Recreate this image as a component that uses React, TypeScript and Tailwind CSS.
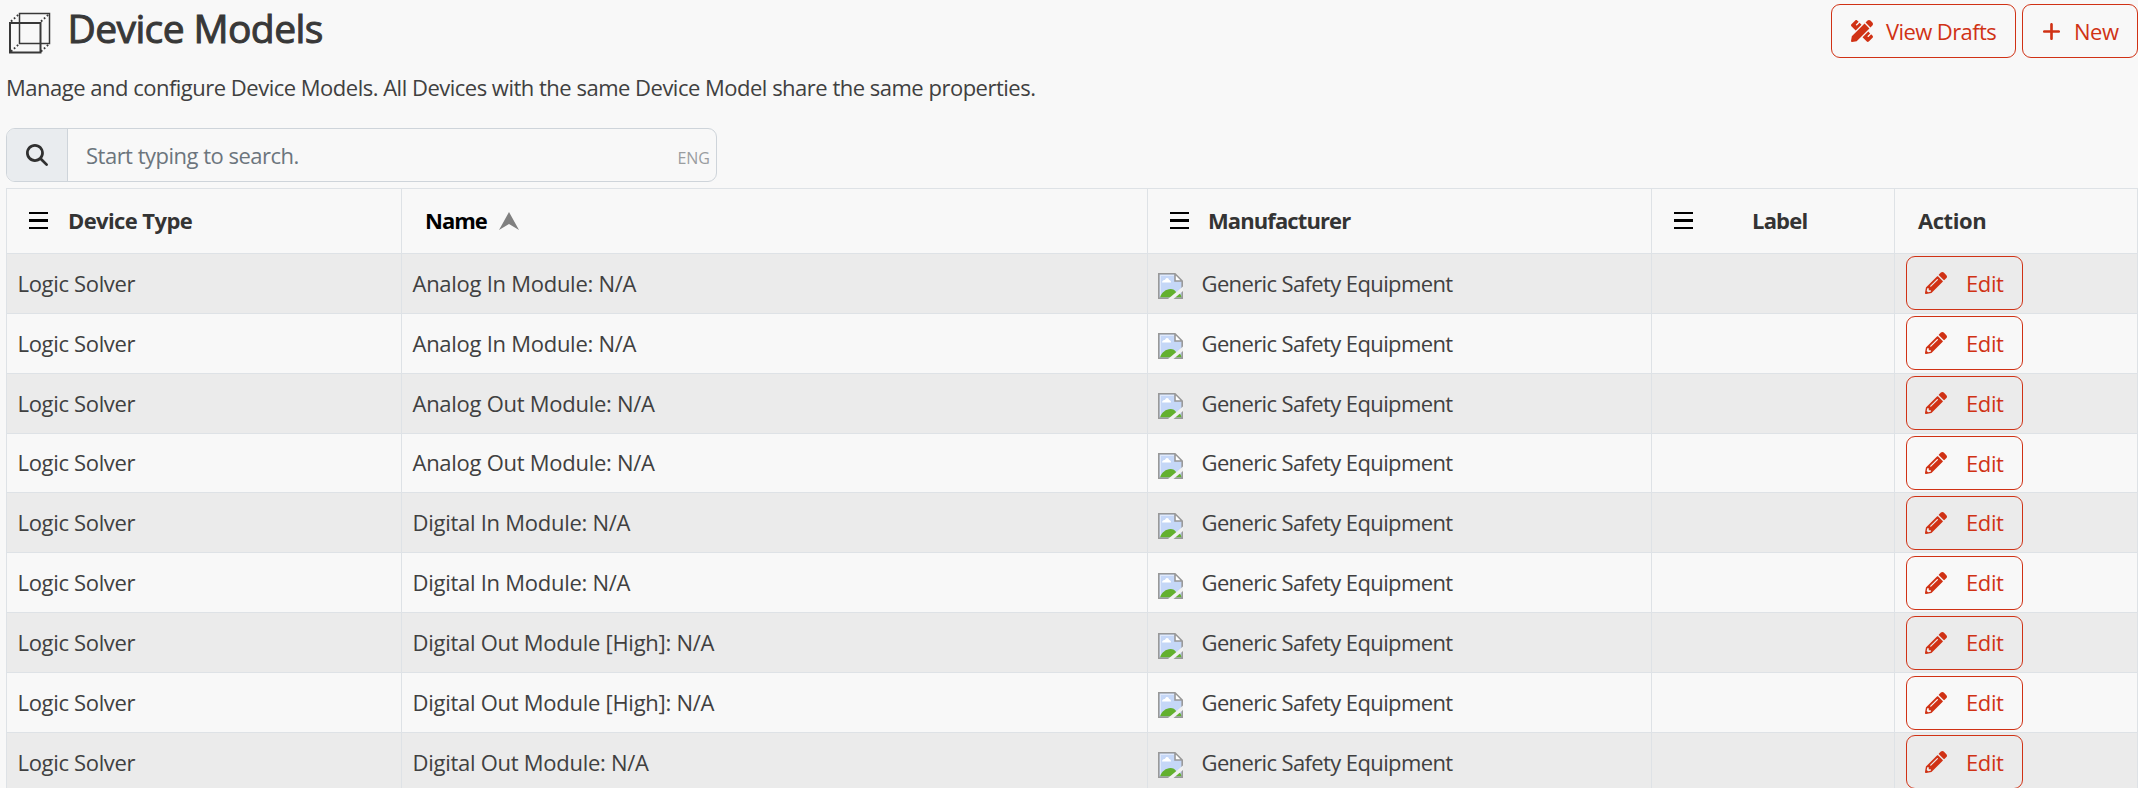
import { FaPencilAlt, FaPencilRuler } from "react-icons/fa";
import { FaMagnifyingGlass, FaPlus } from "react-icons/fa6";

const names = [
  "Analog In Module: N/A",
  "Analog In Module: N/A",
  "Analog Out Module: N/A",
  "Analog Out Module: N/A",
  "Digital In Module: N/A",
  "Digital In Module: N/A",
  "Digital Out Module [High]: N/A",
  "Digital Out Module [High]: N/A",
  "Digital Out Module: N/A",
];

function CubeIcon() {
  return (
    <svg width="42" height="42" viewBox="0 0 42 42" fill="none" stroke="#383838">
      <rect x="10.500" y="1.500" width="30" height="30" strokeWidth="1.5" />
      <rect x="1" y="11" width="30.500" height="29.500" strokeWidth="2" />
      <path
        d="M2 9.500 10 2M32 9.500 40 2M2 39.500 10 32M32 39.500 40 32"
        strokeWidth="1.8"
        strokeDasharray="1.8 2.2"
      />
    </svg>
  );
}

function MenuIcon() {
  return (
    <svg width="19" height="17" viewBox="0 0 19 17" shapeRendering="crispEdges">
      <path d="M0 0h19v2H0zM0 7h19v3H0zM0 15h19v2H0z" />
    </svg>
  );
}

function SortIcon() {
  return (
    <svg width="20" height="18" viewBox="0 0 20 18" fill="#808080">
      <path d="M10 0 20 18 10 12 0 18z" />
    </svg>
  );
}

function BrokenImage() {
  return (
    <svg width="25" height="26" viewBox="0 0 25 26">
      <path d="M1 1h16l7 7v17H1z" fill="#c5d7f7" />
      <path d="M2.300 24V2.300H16" fill="none" stroke="#e6eefc" strokeWidth="1" />
      <path d="M4 9.500c0-2 2-2.500 3-2.500 1-3 4-2 4 0 1.500 0 2 1 2 2.500z" fill="#fff" />
      <path d="M2 24.500c1.500-5 6-8.500 10.500-8.500 2.500 0 4.500 1 6 3.500l3.500 1 2 4z" fill="#62b02e" />
      <path d="M17 1v7h7z" fill="#fff" />
      <path
        d="M17 0.800V8h7.200M0.800 25.200V0.800H17l7.200 7.200v17.200z"
        fill="none"
        stroke="#999999"
        strokeWidth="1.600"
      />
      <path d="M25 13.500V18L15.500 26H10z" fill="#f0f0f0" />
    </svg>
  );
}

function EditButton() {
  return (
    <button className="flex h-[54px] w-[117px] items-center rounded-[9px] border border-[#d03215] pl-[18px] text-[#d03215]">
      <FaPencilAlt size={22} />
      <span className="ml-[19px] tracking-[-0.4px]">Edit</span>
    </button>
  );
}

const grid = "grid grid-cols-[395px_746px_504px_243px_243px]";
const cell = "flex items-center border-r border-[#dee2e6]";

export default function App() {
  return (
    <div className="h-[788px] overflow-hidden bg-[#f8f8f8] pl-1.5 font-['Open_Sans',sans-serif] text-[22px] text-[#404040]">
      <header className="flex h-[66px] items-start justify-between">
        <div className="flex items-start pt-[12px] pl-[3px]">
          <CubeIcon />
          <h1 className="mt-[-11px] ml-[16.5px] text-[39px] leading-[54px] tracking-[-0.6px] text-[#383838] [-webkit-text-stroke:1px_#383838]">
            Device Models
          </h1>
        </div>
        <div className="flex gap-1.5 pt-1 text-[#d03215]">
          <button className="flex h-[54px] w-[185px] items-center rounded-[9px] border border-[#d03215] pl-[19px]">
            <FaPencilRuler size={22} />
            <span className="ml-[13px] tracking-[-0.6px]">View Drafts</span>
          </button>
          <button className="flex h-[54px] w-[116px] items-center rounded-[9px] border border-[#d03215] pl-[18px]">
            <FaPlus size={21} />
            <span className="ml-[12px] tracking-[-0.5px]">New</span>
          </button>
        </div>
      </header>
      <p className="h-[62px] leading-[42px] tracking-[-0.5px]">
        Manage and configure Device Models. All Devices with the same Device Model share the same properties.
      </p>
      <div className="flex h-[54px] w-[711px] items-center overflow-hidden rounded-[9px] border border-[#ced4da]">
        <div className="flex h-full w-[61px] items-center border-r border-[#ced4da] bg-[#e9ecef] pl-[19px] text-[#303030]">
          <FaMagnifyingGlass size={22} />
        </div>
        <span className="ml-[18px] flex-1 tracking-[-0.5px] text-[#6c757d]">Start typing to search.</span>
        <span className="mt-1.5 mr-1.5 text-base text-[#9a9da0]">ENG</span>
      </div>
      <div className="mt-1.5 w-[2132px] border-t border-l border-[#dee2e6]">
        <div className={`${grid} h-[64.9px] border-b border-[#dee2e6] font-bold text-[#343434]`}>
          <div className={`${cell} pl-[22px]`}>
            <MenuIcon />
            <span className="ml-5 tracking-[-0.6px]">Device Type</span>
          </div>
          <div className={`${cell} pl-[23px] text-black`}>
            <span className="tracking-[-1px]">Name</span>
            <span className="ml-[12px]"><SortIcon /></span>
          </div>
          <div className={`${cell} pl-[22px]`}>
            <MenuIcon />
            <span className="ml-[19px] tracking-[-0.9px]">Manufacturer</span>
          </div>
          <div className={`${cell} pl-[22px]`}>
            <MenuIcon />
            <span className="ml-[59px] tracking-[-0.8px]">Label</span>
          </div>
          <div className={`${cell} pl-[23px]`}>
            <span className="tracking-[-0.45px]">Action</span>
          </div>
        </div>
        {names.map((name, i) => (
          <div key={i} className={`${grid} h-[59.89px] border-b border-[#dee2e6] ${i % 2 === 0 ? "bg-[#ebebeb]" : ""}`}>
            <div className={`${cell} pl-[10.5px] tracking-[-0.33px]`}>Logic Solver</div>
            <div className={`${cell} pl-[10.5px] tracking-[-0.27px]`}>{name}</div>
            <div className={`${cell} pl-[10px]`}>
              <span className="mt-1.5"><BrokenImage /></span>
              <span className="ml-[18.5px] tracking-[-0.62px]">Generic Safety Equipment</span>
            </div>
            <div className={cell} />
            <div className="flex items-start border-r border-[#dee2e6] pt-[2.55px] pl-[11px]">
              <EditButton />
            </div>
          </div>
        ))}
      </div>
    </div>
  );
}
